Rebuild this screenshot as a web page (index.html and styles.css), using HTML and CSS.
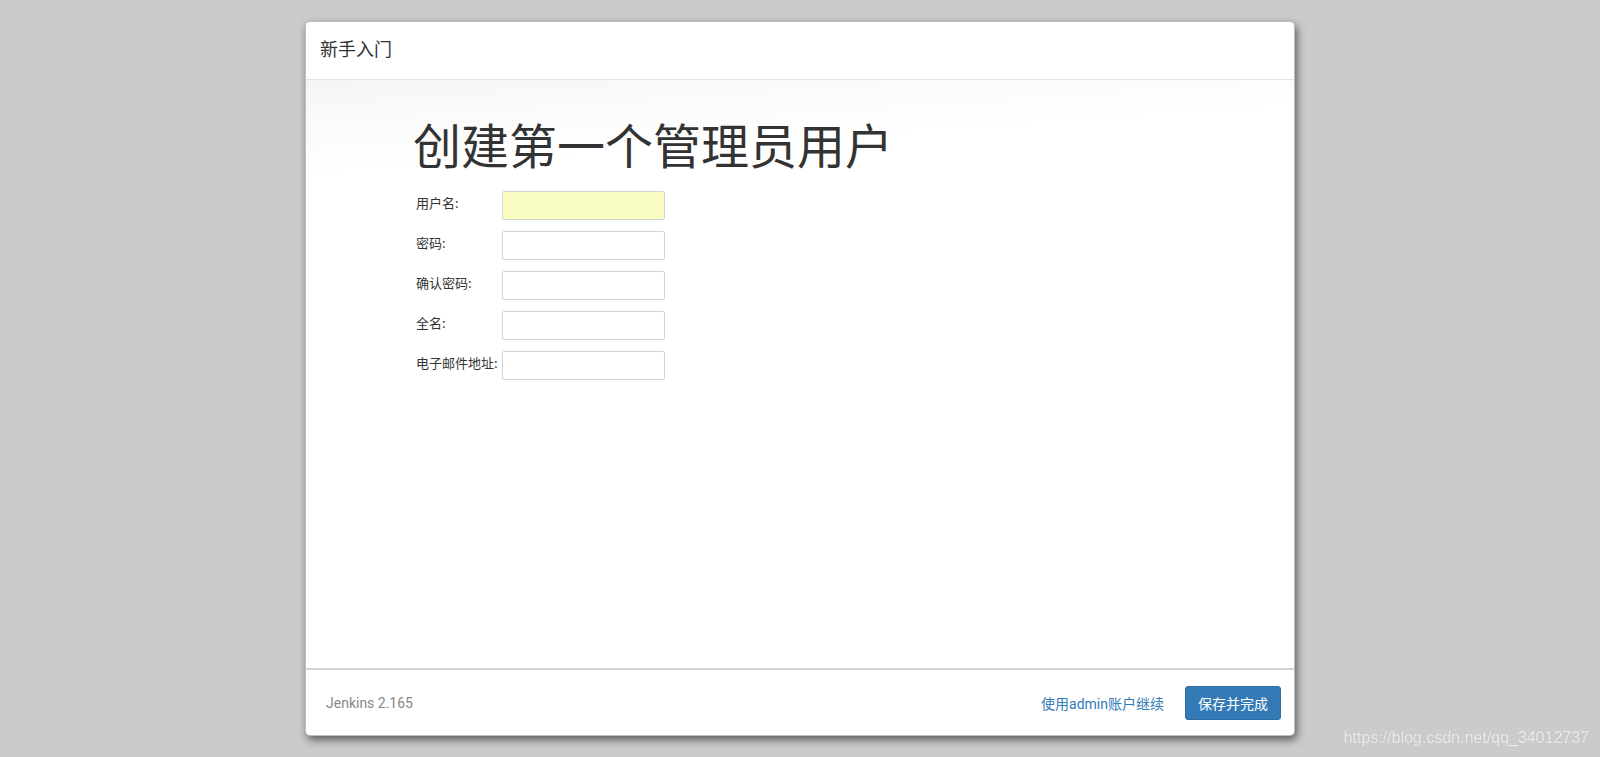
FILE: index.html
```html
<!DOCTYPE html>
<html lang="zh-CN">
<head>
<meta charset="utf-8">
<title>新手入门</title>
<link rel="stylesheet" href="styles.css">
</head>
<body>
<div class="page">
  <div class="dialog">
    <div class="dialog-header">
      <h4 class="dialog-title">新手入门</h4>
    </div>
    <div class="dialog-body">
      <div class="content">
        <h1 class="heading">创建第一个管理员用户</h1>
        <form class="form">
          <label class="label">用户名:</label>
          <input class="input input-filled" type="text">
          <label class="label">密码:</label>
          <input class="input" type="password">
          <label class="label">确认密码:</label>
          <input class="input" type="password">
          <label class="label">全名:</label>
          <input class="input" type="text">
          <label class="label">电子邮件地址:</label>
          <input class="input" type="text">
        </form>
      </div>
    </div>
    <div class="dialog-footer">
      <span class="version">Jenkins 2.165</span>
      <div class="actions">
        <a class="link" href="#">使用admin账户继续</a>
        <button class="btn" type="button">保存并完成</button>
      </div>
    </div>
  </div>
  <div class="watermark">https://blog.csdn.net/qq_34012737</div>
</div>
</body>
</html>
```

FILE: styles.css
```css
html, body {
  margin: 0;
  padding: 0;
  height: 100%;
}
body {
  background: #cbcbcb;
  font-family: Roboto, "Noto Sans CJK SC", sans-serif;
  color: #333;
  overflow: hidden;
}
.page {
  height: 757px;
  padding-top: 21px;
  box-sizing: border-box;
  position: relative;
}
.dialog {
  width: 990px;
  height: 715px;
  margin: 0 auto;
  background: #fff;
  border: 1px solid rgba(0,0,0,.25);
  border-radius: 5px;
  box-sizing: border-box;
  box-shadow: 2px 4px 8px rgba(0,0,0,.55);
  display: flex;
  flex-direction: column;
  overflow: hidden;
}
.dialog-header {
  height: 58px;
  padding: 0 14px 5px 14px;
  box-sizing: border-box;
  border-bottom: 1px solid #e5e5e5;
  display: flex;
  align-items: center;
  flex-shrink: 0;
}
.dialog-title {
  margin: 0;
  font-weight: normal;
  font-size: 18px;
  color: #333;
  font-family: "Noto Sans CJK SC", sans-serif;
}
.dialog-body {
  flex: 1;
  background: linear-gradient(176deg, #f5f5f5 0, #fafafa 40px, #fff 95px);
}
.content {
  padding: 34px 0 0 110px;
}
.heading {
  margin: 0 0 19px -3px;
  font-family: "Noto Sans CJK SC", sans-serif;
  font-weight: normal;
  font-size: 48px;
  line-height: 58px;
  color: #333;
  letter-spacing: 0;
}
.form {
  display: grid;
  grid-template-columns: 86px 163px;
  row-gap: 11px;
  align-items: start;
}
.label {
  font-family: "Noto Sans CJK SC", sans-serif;
  font-size: 13px;
  line-height: 18px;
  padding-top: 3px;
  color: #333;
  white-space: nowrap;
}
.input {
  height: 29px;
  box-sizing: border-box;
  border: 1px solid #d4d4d4;
  border-radius: 2px;
  background: #fff;
  margin: 0;
  padding: 2px 6px;
  font-size: 13px;
}
.input-filled {
  background: #f9fdc1;
}
.dialog-footer {
  height: 67px;
  flex-shrink: 0;
  border-top: 2px solid #d3d3d3;
  box-sizing: border-box;
  padding: 0 13px 0 20px;
  display: flex;
  align-items: center;
  justify-content: space-between;
}
.version {
  font-size: 14px;
  color: #888;
}
.actions {
  display: flex;
  align-items: center;
  gap: 21px;
}
.link {
  color: #337ab7;
  text-decoration: none;
  font-size: 14px;
  font-family: Roboto, "Noto Sans CJK SC", sans-serif;
}
.btn {
  width: 96px;
  height: 34px;
  border: 1px solid #2e6da4;
  border-radius: 3px;
  background: #337ab7;
  color: #fff;
  font-size: 14px;
  font-family: "Noto Sans CJK SC", sans-serif;
  padding: 0;
  cursor: pointer;
}
.watermark {
  position: absolute;
  right: 11px;
  bottom: 10px;
  font-family: "Liberation Sans", Arial, sans-serif;
  font-size: 16px;
  color: rgba(255,255,255,.75);
  text-shadow: 0 0 1px rgba(0,0,0,.15);
  letter-spacing: 0;
}
```
